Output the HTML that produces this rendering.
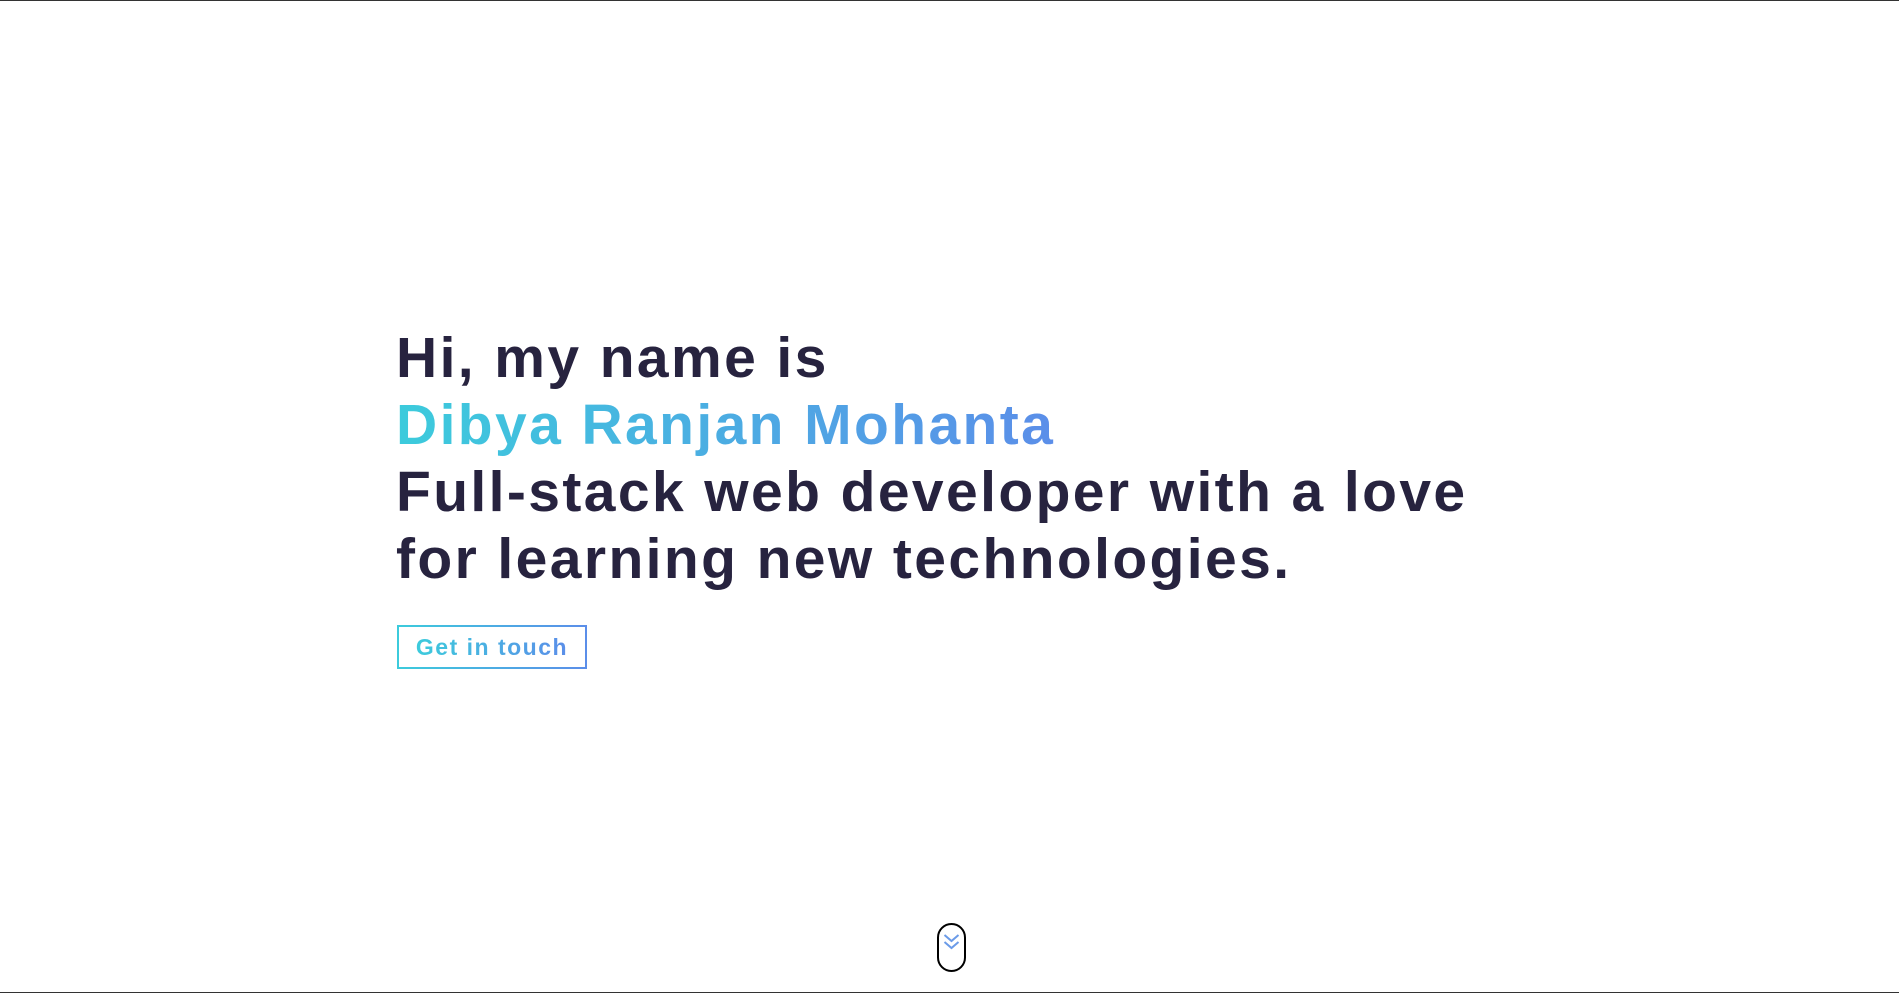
<!DOCTYPE html>
<html><head><meta charset="utf-8"><style>
html,body{margin:0;padding:0;}
body{width:1899px;height:993px;position:relative;background:#fff;overflow:hidden;font-family:"Liberation Sans",sans-serif;border-top:1px solid #333;border-bottom:1px solid #333;box-sizing:border-box;}
.h{position:absolute;left:396px;top:324px;font-size:57px;font-weight:bold;line-height:67px;color:#27233f;white-space:nowrap;letter-spacing:2.4px;}
.g{background:linear-gradient(90deg,#3ccbdc,#5b8ee9);-webkit-background-clip:text;background-clip:text;color:transparent;display:inline-block;}
.btn{position:absolute;left:397px;top:624px;width:190px;height:44px;box-sizing:border-box;border:2px solid;border-image:linear-gradient(90deg,#3ccbdc,#5b8ee9) 1;font-size:23px;font-weight:bold;line-height:40px;text-align:center;letter-spacing:1.5px;}
.btn span{background:linear-gradient(90deg,#3ccbdc,#5b8ee9);-webkit-background-clip:text;background-clip:text;color:transparent;}
.sc{position:absolute;left:937px;top:922px;width:29px;height:49px;box-sizing:border-box;border:2px solid #000;border-radius:15px;}
</style></head><body>
<div class="h">Hi, my name is<br><span class="g">Dibya Ranjan Mohanta</span><br>Full-stack web developer with a love<br>for learning new technologies.</div>
<div class="btn"><span>Get in touch</span></div>
<div class="sc"><svg width="25" height="45" viewBox="0 0 25 45" style="position:absolute;left:0;top:0"><path d="M5.5 10 L12.5 16 L19.5 10 M5.5 17 L12.5 23 L19.5 17" fill="none" stroke="#6b9be8" stroke-width="2"/></svg></div>
</body></html>
